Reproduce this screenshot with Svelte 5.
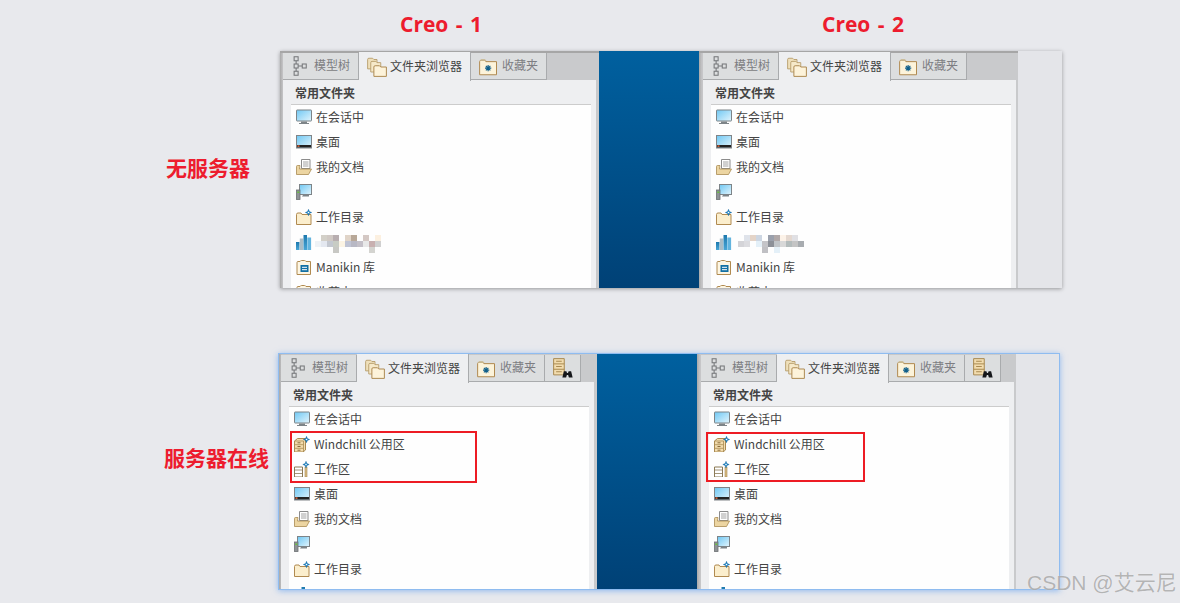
<script>
  // Creo folder browser panels, with and without a connected server
  const mosaicA = [
    ['', '#d3d0c8', '#d0c9c4', '#b8aeb0', '', '#e0d4c8', '#b8a898', '', '#d4c8c4', '', '#fcf0e0'],
    ['#eef2f6', '#e4e8f0', '#c4c8d0', '#c8ccc4', '#fcf4e4', '#c0c4d4', '#b8b8c4', '#c4c0c8', '#e8e8e8', '#c8b0b0', '#d0d0d0'],
    ['', '', '', '#c8c8c4', '', '', '', '', '', '#d4d4d0', '']
  ]
  const mosaicB = [
    ['', '#dfe3ea', '#e4d4c8', '#cdd6e2', '', '#9aa0ac', '#b0a8a8', '#fcf2e8', '#e4d8d0', '#e0e0e4', ''],
    ['#d4d4d8', '#dcdce0', '', '#e4f0f8', '#c4c4c8', '#8c9098', '#c0c4c8', '#d8d8d8', '#b4bcbc', '#c4c4c4', '#a8acb0'],
    ['', '', '', '', '#c0c0c4', '', '#e4f0f8', '', '', '', '']
  ]

  const plainRows = [
    { icon: 'session', label: '在会话中' },
    { icon: 'desktop', label: '桌面' },
    { icon: 'docs', label: '我的文档' },
    { icon: 'computer', label: '' },
    { icon: 'workdir', label: '工作目录' },
    { icon: 'library', mosaic: true },
    { icon: 'manikin', label: 'Manikin 库' },
    { icon: 'manikin', label: '收藏夹' }
  ]
  const serverRows = [
    { icon: 'session', label: '在会话中' },
    { icon: 'cabinet', label: 'Windchill 公用区' },
    { icon: 'workspace', label: '工作区' },
    { icon: 'desktop', label: '桌面' },
    { icon: 'docs', label: '我的文档' },
    { icon: 'computer', label: '' },
    { icon: 'workdir', label: '工作目录' },
    { icon: 'library', mosaic: true }
  ]
</script>

{#snippet star(x, y)}
  <path d="M{x} {y - 3.2}l.9 2.3 2.3.9-2.3.9-.9 2.300-.9-2.300-2.300-.9 2.300-.9z" fill="#1c86c8" stroke="#0b5c94" stroke-width=".4" />
  <circle cx={x} cy={y} r=".8" fill="#fff" />
{/snippet}

{#snippet icon(name)}
  <svg class="icon" viewBox="0 0 16 16" aria-hidden="true">
    {#if name === 'tree'}
      <g fill="none" stroke="#77797c" stroke-width=".85">
        <rect x="2.500" y=".6" width="3.200" height="3.200" />
        <rect x="2.500" y="6.400" width="3.200" height="3.200" />
        <rect x="2.500" y="12.200" width="3.200" height="3.200" />
        <rect x="9" y="6.400" width="3.200" height="3.200" />
        <path d="M4.100 3.800v2.600M4.100 9.600v2.600M5.700 8H9" />
      </g>
    {:else if name === 'folders'}
      <path d="M.5 9.500V2q0-1 1-1h3l1 1h2.500v7.500z" fill="#efe0bb" stroke="#b59a68" stroke-width=".7" />
      <path d="M3 12V4.500q0-1 1-1h3l1 1h3V12z" fill="#f6e9c9" stroke="#b59a68" stroke-width=".7" />
      <path d="M5.500 15.500V8q0-1 1-1H10l1 1h4.500v7.500z" fill="#fdf3da" stroke="#ae8a52" stroke-width=".8" />
    {:else if name === 'favorite'}
      <path d="M.5 15V4.500q0-1 1-1h3l1 1h8.500V15z" fill="#fcf3da" stroke="#b08a50" stroke-width=".8" />
      <path d="M.8 4q0-1.500 1.200-1.500h2.800L6 4z" fill="#c8b68c" />
      <path d="M7.300 7.200v5M4.800 9.700h5M5.500 7.900l3.600 3.600M9.100 7.900l-3.600 3.600" stroke="#0f5f8a" stroke-width=".9" />
    {:else if name === 'session'}
      <rect x=".5" y="1" width="15" height="11" rx=".5" fill="url(#screen)" stroke="#7d8488" />
      <path d="M5 12.500h6v1.500h2v1H3v-1h2z" fill="#7d8488" />
    {:else if name === 'desktop'}
      <rect x=".5" y="1.500" width="15" height="12.500" fill="url(#screen)" stroke="#808488" />
      <rect x="1" y="11" width="14" height="2.500" fill="#222" />
      <rect x="1.500" y="11.300" width="2" height="1.600" fill="#d8643c" />
    {:else if name === 'docs'}
      <path d="M5.500 .5h8.500v9H5.500z" fill="#fff" stroke="#8b8b8b" />
      <path d="M7 3h5.500M7 5h5.500M7 7h5.500" stroke="#8b8b8b" stroke-width=".8" />
      <path d="M.5 15.500V7.500q0-1 1-1H4l-.5 3.500h12l-3 5.500z" fill="#ecd5a2" stroke="#a98a52" stroke-width=".8" />
    {:else if name === 'computer'}
      <rect x="3.500" y=".5" width="12" height="10" fill="url(#screen)" stroke="#7d8488" />
      <path d="M7 11h6v1.500H6z" fill="#7d8488" />
      <rect x=".5" y="6" width="3.500" height="9.500" fill="#8f9396" stroke="#6c6f72" stroke-width=".8" />
      <rect x="1.300" y="7.500" width="2" height="1.500" fill="#68c040" />
    {:else if name === 'workdir'}
      <path d="M.5 15.500V5.500q0-1.500 1.500-1.500h3l1 1.500h9v10z" fill="#fbeecd" stroke="#b08a50" />
      {@render star(12.500, 3.500)}
    {:else if name === 'library'}
      <rect x="0" y="8" width="3.500" height="8" fill="url(#book)" />
      <rect x="3.800" y="4.500" width="3.500" height="11.500" fill="#a9bcc6" />
      <rect x="7.500" y="1" width="3.500" height="15" fill="url(#book)" />
      <rect x="11.300" y="3.500" width="3.800" height="12.500" fill="#62b4de" />
    {:else if name === 'manikin'}
      <path d="M1 15.500V3.500q0-1 1-1h2q.5-1 1.500-1h3q1 0 1.500 1h4.500v13z" fill="#fdf6e3" stroke="#b08a50" />
      <rect x="4.500" y="6" width="8" height="7" fill="#1270a4" />
      <path d="M6 8.300h5M6 10.700h5" stroke="#fff" />
    {:else if name === 'cabinet'}
      <path d="M.5 5l3-2.500h8V14l-2.500 2H.5z" fill="#f2dcae" stroke="#a98a52" />
      <path d="M.5 8.700h9M.5 12.300h9M9.500 5v11M.5 5h9" stroke="#a98a52" stroke-width=".8" fill="none" />
      <path d="M3.500 6.800h3M3.500 10.500h3M3.500 14.200h3" stroke="#8a6c3a" />
      {@render star(12.500, 3.500)}
    {:else if name === 'workspace'}
      <path d="M.5 6h8v10h-8z" fill="#fff" stroke="#8b7a55" />
      <path d="M.5 9h8M.5 12.500h8" stroke="#8b7a55" stroke-width=".8" />
      <rect x="11" y="6" width="2" height="10" fill="#d9bd83" stroke="#a98a52" stroke-width=".6" />
      {@render star(12, 3.500)}
    {:else if name === 'server'}
      <path d="M.5 .5h8.500v13h-8.500z" fill="#f2dcae" stroke="#a98a52" stroke-width=".8" />
      <path d="M.5 4.700h8.500M.5 9h8.500M2.500 2.600h4.500M2.500 6.800h4.500M2.500 11h4.500" stroke="#a98a52" stroke-width=".8" />
      <path d="M7.500 15.500l1.200-5h2l.5 1.500h.8l.5-1.500h2l1.200 5h-3l-.6-2h-1l-.6 2z" fill="#15171a" />
    {/if}
  </svg>
{/snippet}

{#snippet panel(rows, mosaic, withServer)}
  <div class="panel">
    <div class="tabs">
      <div class="tab">{@render icon('tree')}<span>模型树</span></div>
      <div class="tab active">{@render icon('folders')}<span>文件夹浏览器</span></div>
      <div class="tab">{@render icon('favorite')}<span>收藏夹</span></div>
      {#if withServer}
        <div class="tab icon-only">{@render icon('server')}</div>
      {/if}
    </div>
    <div class="body">
      <div class="title">常用文件夹</div>
      <ul class="list">
        {#each rows as row}
          <li>
            {@render icon(row.icon)}
            {#if row.mosaic}
              <span class="mosaic">
                {#each mosaic.flat() as color}
                  <i style="background: {color || 'transparent'}"></i>
                {/each}
              </span>
            {:else}
              <span>{row.label}</span>
            {/if}
          </li>
        {/each}
      </ul>
    </div>
  </div>
{/snippet}

<svg class="defs" width="0" height="0" aria-hidden="true">
  <defs>
    <linearGradient id="screen" x1="0" y1="0" x2="1" y2="1">
      <stop offset="0" stop-color="#6fc8f4" />
      <stop offset="1" stop-color="#e2f4fc" />
    </linearGradient>
    <linearGradient id="book" x1="0" y1="0" x2="0" y2="1">
      <stop offset="0" stop-color="#1d78ad" />
      <stop offset="1" stop-color="#49a6d6" />
    </linearGradient>
  </defs>
</svg>

<main class="page">
  <header class="heads">
    <h2>Creo - 1</h2>
    <h2>Creo - 2</h2>
  </header>

  <section class="row first">
    <h3>无服务器</h3>
    <div class="window">
      {@render panel(plainRows, mosaicA, false)}
      <div class="viewport"></div>
      {@render panel(plainRows, mosaicB, false)}
      <div class="rest"></div>
    </div>
  </section>

  <section class="row second">
    <h3>服务器在线</h3>
    <div class="window online">
      {@render panel(serverRows, [], true)}
      <div class="viewport"></div>
      {@render panel(serverRows, [], true)}
      <div class="rest"></div>
      <div class="mark mark-a"></div>
      <div class="mark mark-b"></div>
    </div>
  </section>

  <div class="watermark">CSDN @艾云尼</div>
</main>

<style>
  :global(body) {
    margin: 0;
    background: #e8e9ed;
  }

  .defs {
    position: absolute;
  }

  .page {
    position: relative;
    width: 1180px;
    height: 603px;
    overflow: hidden;
    font-family: "Noto Sans CJK SC", "Noto Sans", sans-serif;
    color: #444;
  }

  .heads {
    display: flex;
    gap: 302px;
    padding: 9px 0 0 400px;
    height: 51px;
    box-sizing: border-box;
  }

  h2 {
    margin: 0;
    width: 120px;
    font: 700 21px/30px "Open Sans", "Noto Sans", sans-serif;
    word-spacing: 2px;
    color: #ed1c2e;
    white-space: pre;
  }

  h3 {
    margin: 0;
    font-size: 21px;
    line-height: 30px;
    font-weight: 700;
    color: #ed1c2e;
    white-space: nowrap;
  }

  .row {
    display: flex;
    align-items: flex-start;
  }

  .row.first {
    padding-left: 166px;
  }

  .row.first h3 {
    width: 114px;
    margin-top: 101px;
  }

  .row.second {
    padding-left: 164px;
    margin-top: 65px;
  }

  .row.second h3 {
    width: 114px;
    margin-top: 89px;
  }

  .window {
    position: relative;
    display: flex;
    width: 782px;
    height: 237px;
    overflow: hidden;
    background: #e4e5e9;
    box-shadow: 0 1px 4px rgba(0, 0, 0, 0.35);
  }

  .window.online {
    box-sizing: border-box;
    border: 1px solid #8fbcf0;
    box-shadow: 0 1px 6px rgba(100, 160, 240, 0.65);
  }

  .panel {
    width: 319px;
    flex: none;
    box-sizing: border-box;
    padding-left: 3px;
    padding-right: 3px;
    background: linear-gradient(90deg, #a9a9a9, #c6c6c8 3px, #c9cacc);
    border-top: 2px solid #a6a6a6;
  }

  .viewport + .panel {
    padding-left: 4px;
    padding-right: 2px;
  }

  .online .panel {
    width: 318px;
    padding-left: 2px;
    border-top: 0;
    padding-top: 1px;
  }

  .online .viewport + .panel {
    width: 319px;
    padding-left: 4px;
  }

  .tabs {
    display: flex;
    height: 27px;
    background: #c9cacc;
    font-size: 12px;
  }

  .tab {
    display: flex;
    align-items: center;
    gap: 3px;
    width: 76px;
    box-sizing: border-box;
    padding-left: 8px;
    background: #dcdedf;
    border-right: 1px solid #a9abad;
    border-bottom: 1px solid #a9abad;
    color: #7d7d82;
    line-height: 1;
  }

  .tab span {
    margin-top: -2px;
  }

  .tab .icon {
    flex: none;
    width: 20px;
    height: 20px;
  }

  .tab.active {
    width: 112px;
    height: 29px;
    margin-top: -1px;
    background: #eeeff1;
    border-bottom: 0;
    color: #444;
    position: relative;
    z-index: 1;
  }

  .tab.icon-only {
    width: 36px;
  }

  .body {
    height: 260px;
    padding: 0 5px 0 8px;
    background: #eeeff1;
  }

  .title {
    height: 24px;
    padding-left: 4px;
    font-size: 12px;
    line-height: 25px;
    font-weight: 700;
    color: #444;
    border-bottom: 1px solid #ccc;
  }

  .list {
    margin: 0;
    padding: 0;
    list-style: none;
    background: #fefefe;
    height: 236px;
    font-size: 12px;
  }

  .list li {
    display: flex;
    align-items: center;
    gap: 4px;
    height: 25px;
    padding-left: 5px;
    line-height: 1;
    color: #444;
  }

  .list li:first-child {
    height: 24px;
  }

  .icon {
    display: block;
    width: 16px;
    height: 16px;
  }

  .mosaic {
    display: grid;
    grid-template-columns: repeat(11, 6px);
    grid-auto-rows: 6px;
    margin: 5px 0 0 -1px;
  }

  .viewport + .panel .mosaic {
    margin-left: 2px;
  }

  .viewport {
    width: 100px;
    flex: none;
    background: linear-gradient(#00609f, #004176);
  }

  .rest {
    flex: 1;
    background: #e4e5e9;
  }

  .mark {
    position: absolute;
    box-sizing: border-box;
    border: 2px solid #ed1c24;
  }

  .mark-a {
    left: 11px;
    top: 77px;
    width: 187px;
    height: 52px;
  }

  .mark-b {
    left: 427px;
    top: 78px;
    width: 159px;
    height: 50px;
  }

  .watermark {
    position: absolute;
    left: 1027px;
    top: 568px;
    font-family: "Liberation Sans", "Noto Sans CJK SC", sans-serif;
    font-size: 21px;
    line-height: 30px;
    white-space: nowrap;
    color: rgba(150, 150, 150, 0.7);
    text-shadow: 0 0 1px rgba(255, 255, 255, 0.7);
  }
</style>
